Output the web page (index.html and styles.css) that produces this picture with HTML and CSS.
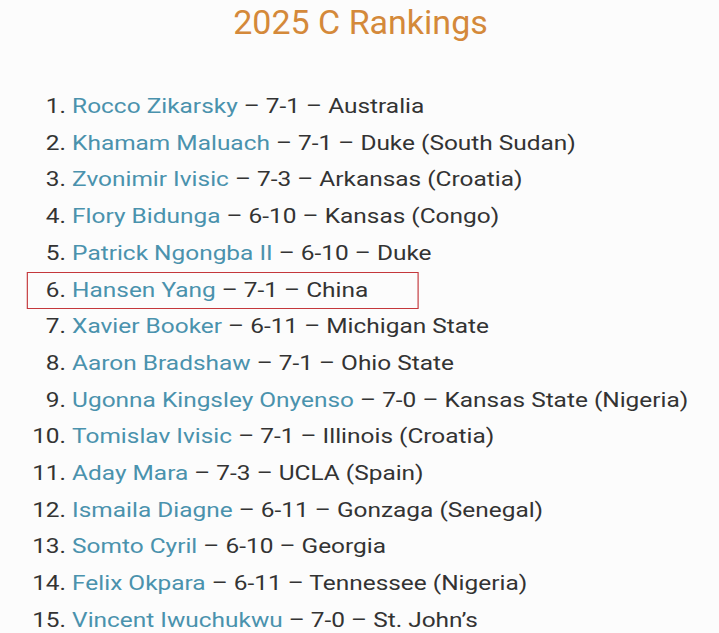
FILE: index.html
```html
<!DOCTYPE html>
<html>
<head>
<meta charset="utf-8">
<link rel="stylesheet" href="styles.css">
</head>
<body>
<main class="page">
  <h1 class="title">2025 C Rankings</h1>
  <ol class="rankings">
    <li><a class="name">Rocco Zikarsky</a> – 7-1 – Australia</li>
    <li><a class="name">Khamam Maluach</a> – 7-1 – Duke (South Sudan)</li>
    <li><a class="name">Zvonimir Ivisic</a> – 7-3 – Arkansas (Croatia)</li>
    <li><a class="name">Flory Bidunga</a> – 6-10 – Kansas (Congo)</li>
    <li><a class="name">Patrick Ngongba II</a> – 6-10 – Duke</li>
    <li class="highlight"><a class="name">Hansen Yang</a> – 7-1 – China</li>
    <li><a class="name">Xavier Booker</a> – 6-11 – Michigan State</li>
    <li><a class="name">Aaron Bradshaw</a> – 7-1 – Ohio State</li>
    <li><a class="name">Ugonna Kingsley Onyenso</a> – 7-0 – Kansas State (Nigeria)</li>
    <li><a class="name">Tomislav Ivisic</a> – 7-1 – Illinois (Croatia)</li>
    <li><a class="name">Aday Mara</a> – 7-3 – UCLA (Spain)</li>
    <li><a class="name">Ismaila Diagne</a> – 6-11 – Gonzaga (Senegal)</li>
    <li><a class="name">Somto Cyril</a> – 6-10 – Georgia</li>
    <li><a class="name">Felix Okpara</a> – 6-11 – Tennessee (Nigeria)</li>
    <li><a class="name">Vincent Iwuchukwu</a> – 7-0 – St. John’s</li>
  </ol>
</main>
</body>
</html>
```
FILE: styles.css
```css
html, body {
  margin: 0;
  padding: 0;
  background: #fcfcfc;
}
.page {
  width: 719px;
  height: 633px;
  overflow: hidden;
  font-family: Roboto, "Noto Sans", sans-serif;
  color: #333333;
}
.title {
  margin: 0;
  padding-top: 2px;
  padding-left: 2px;
  text-align: center;
  font-weight: 400;
  font-size: 34px;
  line-height: 40px;
  color: #d4893a;
}
.rankings {
  margin: 0;
  margin-top: 46px;
  padding-left: 62px;
  font-size: 21px;
  line-height: 36.7px;
  transform: scaleX(1.163);
  transform-origin: 0 0;
}
.rankings li {
  position: relative;
}
.name {
  color: #4a92ad;
  text-decoration: none;
}
.highlight::before {
  content: "";
  position: absolute;
  left: -38.8px;
  top: 0;
  width: 337px;
  height: 37px;
  border: 1.5px solid #c4383c;
  box-sizing: border-box;
}
```
